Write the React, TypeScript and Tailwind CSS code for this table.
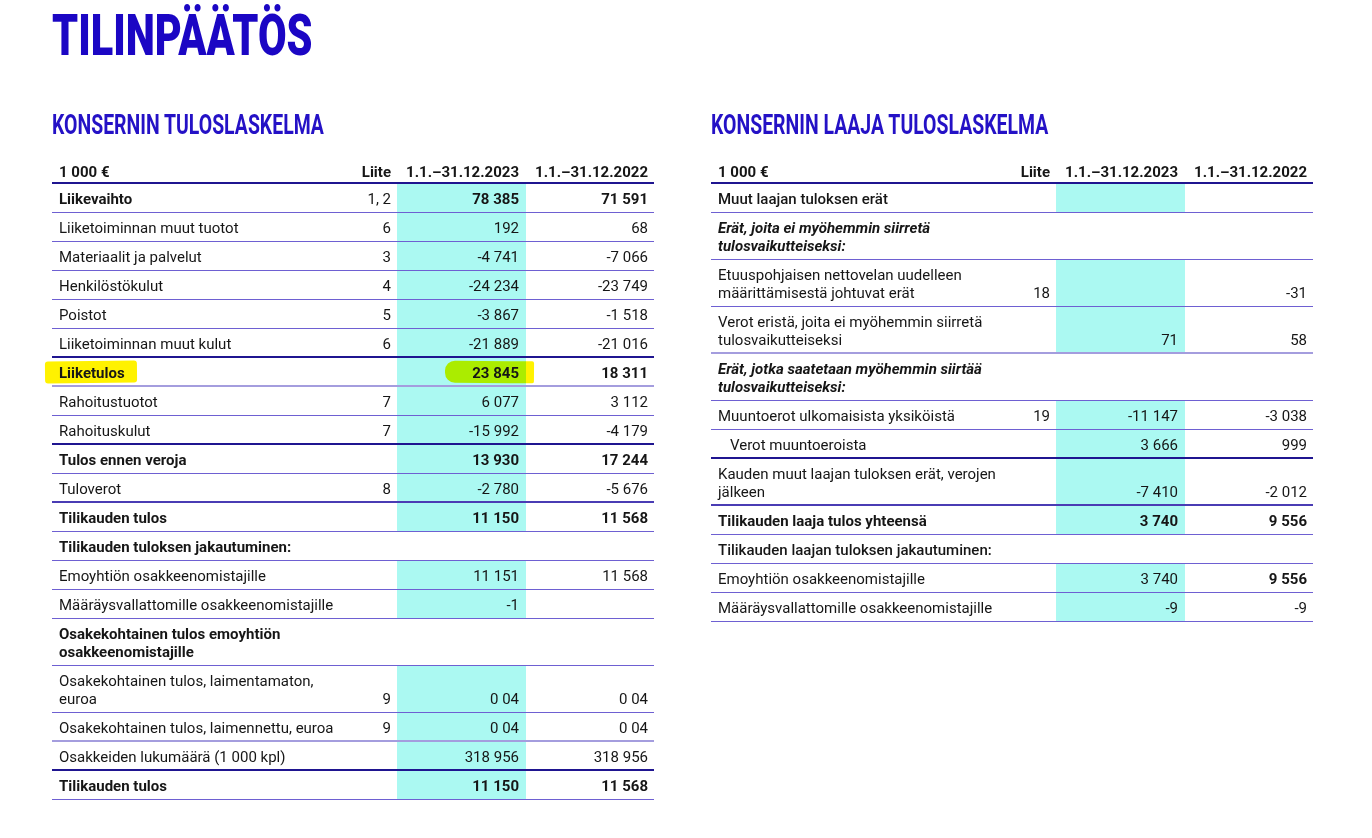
import React from "react";

type Line = "n" | "s" | "soft" | "m";
type Row = {
  label: React.ReactNode;
  liite?: string;
  a?: string;
  b?: string;
  weight?: "bold" | "medium" | "italic";
  cyan?: boolean;
  line?: Line;
  bBold?: boolean;
  indent?: boolean;
  hl?: boolean;
};

const leftRows: Row[] = [
  { label: "Liikevaihto", liite: "1, 2", a: "78 385", b: "71 591", weight: "bold" },
  { label: "Liiketoiminnan muut tuotot", liite: "6", a: "192", b: "68" },
  { label: "Materiaalit ja palvelut", liite: "3", a: "-4 741", b: "-7 066" },
  { label: "Henkilöstökulut", liite: "4", a: "-24 234", b: "-23 749" },
  { label: "Poistot", liite: "5", a: "-3 867", b: "-1 518" },
  { label: "Liiketoiminnan muut kulut", liite: "6", a: "-21 889", b: "-21 016", line: "s" },
  { label: "Liiketulos", a: "23 845", b: "18 311", weight: "bold", line: "soft", hl: true },
  { label: "Rahoitustuotot", liite: "7", a: "6 077", b: "3 112" },
  { label: "Rahoituskulut", liite: "7", a: "-15 992", b: "-4 179", line: "s" },
  { label: "Tulos ennen veroja", a: "13 930", b: "17 244", weight: "bold" },
  { label: "Tuloverot", liite: "8", a: "-2 780", b: "-5 676", line: "m" },
  { label: "Tilikauden tulos", a: "11 150", b: "11 568", weight: "bold" },
  { label: "Tilikauden tuloksen jakautuminen:", weight: "bold", cyan: false },
  { label: "Emoyhtiön osakkeenomistajille", a: "11 151", b: "11 568" },
  { label: "Määräysvallattomille osakkeenomistajille", a: "-1" },
  { label: "Osakekohtainen tulos emoyhtiön osakkeenomistajille", weight: "bold", cyan: false },
  { label: "Osakekohtainen tulos, laimentamaton, euroa", liite: "9", a: "0 04", b: "0 04" },
  { label: "Osakekohtainen tulos, laimennettu, euroa", liite: "9", a: "0 04", b: "0 04", line: "soft" },
  { label: "Osakkeiden lukumäärä (1 000 kpl)", a: "318 956", b: "318 956", line: "s" },
  { label: "Tilikauden tulos", a: "11 150", b: "11 568", weight: "bold" },
];

const rightRows: Row[] = [
  { label: "Muut laajan tuloksen erät", weight: "medium" },
  { label: "Erät, joita ei myöhemmin siirretä tulosvaikutteiseksi:", weight: "italic", cyan: false },
  { label: "Etuuspohjaisen nettovelan uudelleen määrittämisestä johtuvat erät", liite: "18", b: "-31" },
  { label: "Verot eristä, joita ei myöhemmin siirretä tulosvaikutteiseksi", a: "71", b: "58", line: "soft" },
  { label: "Erät, jotka saatetaan myöhemmin siirtää tulosvaikutteiseksi:", weight: "italic", cyan: false },
  { label: "Muuntoerot ulkomaisista yksiköistä", liite: "19", a: "-11 147", b: "-3 038" },
  { label: "Verot muuntoeroista", a: "3 666", b: "999", indent: true, line: "s" },
  { label: "Kauden muut laajan tuloksen erät, verojen jälkeen", a: "-7 410", b: "-2 012", line: "m" },
  { label: "Tilikauden laaja tulos yhteensä", a: "3 740", b: "9 556", weight: "bold" },
  { label: "Tilikauden laajan tuloksen jakautuminen:", weight: "medium", cyan: false },
  { label: "Emoyhtiön osakkeenomistajille", a: "3 740", b: "9 556", bBold: true },
  { label: "Määräysvallattomille osakkeenomistajille", a: "-9", b: "-9" },
];

function lineCls(l: Line | undefined) {
  switch (l) {
    case "s":
      return "border-b-2 border-b-[#1f1590] pb-[3px]";
    case "m":
      return "border-b-2 border-b-[#4a3cb4] pb-[3px]";
    case "soft":
      return "border-b-2 border-b-[#a49dde] pb-[3px]";
    default:
      return "border-b border-b-[#6e60d2] pb-[4px]";
  }
}

function Table({ title, rows }: { title: string; rows: Row[] }) {
  return (
    <div className="w-[602px]">
      <h2 className="h-[27px] text-[27px] leading-[27px] font-bold text-[#2411c6] whitespace-nowrap">
        <span className="inline-block origin-left scale-x-[0.72]">{title}</span>
      </h2>
      <table className="mt-[17px] w-[602px] table-fixed border-collapse text-[15px] leading-[18px] text-[#161616]">
        <colgroup>
          <col className="w-[293px]" />
          <col className="w-[52px]" />
          <col className="w-[129px]" />
          <col className="w-[128px]" />
        </colgroup>
        <thead>
          <tr className="font-bold">
            <th className="border-b-2 border-b-[#1f1590] pl-[7px] pt-[7px] pb-[1px] text-left font-bold">1 000 €</th>
            <th className="border-b-2 border-b-[#1f1590] pr-[6px] pt-[7px] pb-[1px] text-right font-bold">Liite</th>
            <th className="border-b-2 border-b-[#1f1590] pr-[7px] pt-[7px] pb-[1px] text-right font-bold whitespace-nowrap">1.1.–31.12.2023</th>
            <th className="border-b-2 border-b-[#1f1590] pr-[6px] pt-[7px] pb-[1px] text-right font-bold whitespace-nowrap">1.1.–31.12.2022</th>
          </tr>
        </thead>
        <tbody>
          {rows.map((r, i) => {
            const lc = lineCls(r.line);
            const w =
              r.weight === "bold"
                ? "font-bold"
                : r.weight === "medium"
                ? "font-medium"
                : r.weight === "italic"
                ? "font-bold italic"
                : "font-normal";
            const numW = r.weight === "bold" ? "font-bold" : "font-normal";
            const cyan = r.cyan !== false;
            return (
              <tr key={i}>
                <td className={`${lc} ${r.indent ? "pl-[19px]" : "pl-[7px]"} pt-[6px] align-top ${w}`}>
                  {r.hl ? (
                    <span className="relative inline-block">
                      <span className="absolute left-[-14px] right-[-12px] top-[-3px] bottom-[-1px] rounded-[3px] bg-[#fff200] mix-blend-multiply -rotate-[0.6deg]" />
                      <span className="relative">{r.label}</span>
                    </span>
                  ) : (
                    r.label
                  )}
                </td>
                <td className={`${lc} pr-[6px] pt-[6px] text-right align-bottom`}>{r.liite}</td>
                <td
                  className={`${lc} ${cyan ? "bg-[#abf9f2]" : ""} relative pr-[7px] pt-[6px] text-right align-bottom ${numW}`}
                >
                  {r.hl ? (
                    <span className="relative inline-block">
                      <span className="absolute left-[-27px] right-[-15px] top-[-3px] bottom-[-1px] rounded-l-[10px] rounded-r-[2px] bg-[#fff200] mix-blend-multiply rotate-[0.5deg]" />
                      <span className="relative">{r.a}</span>
                    </span>
                  ) : (
                    r.a
                  )}
                </td>
                <td className={`${lc} pr-[6px] pt-[6px] text-right align-bottom ${r.bBold ? "font-bold" : numW}`}>{r.b}</td>
              </tr>
            );
          })}
        </tbody>
      </table>
    </div>
  );
}

export default function App() {
  return (
    <div className="min-h-[838px] w-[1372px] bg-white font-['Roboto',sans-serif] isolate">
      <div className="px-[52px] pt-[6px]">
        <h1 className="h-[58px] text-[58px] leading-[58px] font-black text-[#1b06c4] whitespace-nowrap">
          <span className="inline-block origin-left scale-x-[0.715]">TILINPÄÄTÖS</span>
        </h1>
        <div className="mt-[48px] flex gap-[57px]">
          <Table title="KONSERNIN TULOSLASKELMA" rows={leftRows} />
          <Table title="KONSERNIN LAAJA TULOSLASKELMA" rows={rightRows} />
        </div>
      </div>
    </div>
  );
}
